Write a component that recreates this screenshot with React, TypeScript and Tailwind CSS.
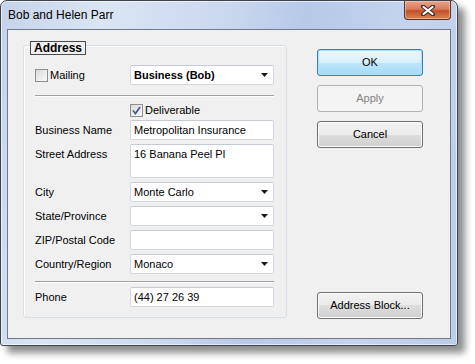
import React from 'react';

const font = { fontFamily: '"Liberation Sans", Arial, sans-serif' };

interface RowProps {
  label: string;
  value?: string;
  combo?: boolean;
  tall?: boolean;
}

const Arrow: React.FC = () => (
  <svg width="7" height="4" viewBox="0 0 7 4" className="shrink-0">
    <path d="M0 0 H7 L3.5 4 Z" fill="#1a1a1a" />
  </svg>
);

const Field: React.FC<{ value?: string; combo?: boolean; tall?: boolean; bold?: boolean }> = ({ value, combo, tall, bold }) => (
  <div
    className={`flex w-[144px] rounded-[2px] border border-[#d3d7de] border-t-[#c5cad2] bg-white pl-[3px] pr-[5px] text-[11px] text-black ${
      tall ? 'h-[34px] items-start pt-[3px]' : 'h-[20px] items-center'
    } ${bold ? 'font-bold' : ''}`}
  >
    <span className="flex-1 truncate leading-[13px]">{value}</span>
    {combo && <Arrow />}
  </div>
);

const Row: React.FC<RowProps> = ({ label, value, combo, tall }) => (
  <div className="flex items-start">
    <div className="w-[106px] pl-[11px] text-[11px] leading-[20px] text-black">{label}</div>
    <Field value={value} combo={combo} tall={tall} />
  </div>
);

const Checkbox: React.FC<{ checked?: boolean }> = ({ checked }) => (
  <div className="flex h-[13px] w-[13px] items-center justify-center border border-[#8e8f8f] bg-gradient-to-br from-[#dcdcdc] to-[#fafafa]">
    {checked && (
      <svg width="9" height="9" viewBox="0 0 9 9">
        <path d="M1 4.5 L3.5 7.5 L8 1" fill="none" stroke="#4b5d8f" strokeWidth="1.8" />
      </svg>
    )}
  </div>
);

const Separator: React.FC = () => <div className="ml-[11px] mr-[12px] h-[2px] border-t border-b border-t-[#a0a0a0] border-b-white" />;

const Button: React.FC<{ label: string; variant?: 'default' | 'disabled' | 'normal' }> = ({ label, variant = 'normal' }) => {
  const styles =
    variant === 'default'
      ? 'border-[#3c7fb1] bg-[linear-gradient(#eaf6fd_0%,#d9f0fc_50%,#bee6fd_50%,#a7d9f5_100%)] text-black shadow-[inset_0_0_0_1px_#a8e1fb]'
      : variant === 'disabled'
      ? 'border-[#adb2b5] bg-[#f4f4f4] text-[#838383]'
      : 'border-[#707070] bg-[linear-gradient(#f2f2f2_0%,#ebebeb_50%,#dddddd_50%,#cfcfcf_100%)] text-black shadow-[inset_0_0_0_1px_#fcfcfc]';
  return (
    <div className={`flex h-[27px] w-[106px] items-center justify-center rounded-[3px] border text-[11px] ${styles}`}>
      {label}
    </div>
  );
};

export default function App() {
  return (
    <div className="h-[364px] w-[475px] bg-white" style={font}>
      <div className="flex h-[346px] w-[458px] flex-col rounded-t-[7px] rounded-b-[3px] border border-[#3d434d] bg-[linear-gradient(100deg,#c4d3ea_0%,#dbe5f4_20%,#c9d7ee_45%,#b7c9e8_60%,#c6d5ee_80%,#bccde9_100%)] px-[6px] pb-[6px] shadow-[7px_7px_7px_rgba(0,0,0,0.45),inset_0_0_0_1px_rgba(255,255,255,0.6)]">
        <div className="flex h-[28px] items-start">
          <div className="pl-[1px] pt-[7px] text-[12px] leading-[14px] text-black">Bob and Helen Parr</div>
          <div className="ml-auto flex h-[19px] w-[47px] items-center justify-center rounded-b-[4px] border border-t-0 border-[#5b3128] bg-[linear-gradient(#e8a68c_0%,#d97b5c_45%,#c24f2b_55%,#d8854e_100%)] shadow-[inset_0_0_0_1px_rgba(255,220,200,0.5)]">
            <svg width="14" height="11" viewBox="0 0 14 11">
              <path d="M2 1.5 L12 9.5 M12 1.5 L2 9.5" stroke="#3a2a2a" strokeWidth="4" strokeLinecap="round" />
              <path d="M2.5 2 L11.5 9 M11.5 2 L2.5 9" stroke="#ffffff" strokeWidth="2.2" strokeLinecap="round" />
            </svg>
          </div>
        </div>
        <div className="flex flex-1 border border-[#6f7b8c] bg-[#f0f0f0] pb-[20px] pl-[15px] pt-[15px]">
          <div className="relative w-[264px] rounded-[3px] border border-[#d5dfe5] shadow-[inset_1px_1px_0_#ffffff]">
            <div className="absolute left-[6px] top-[-5px] border border-[#4b4b4b] bg-[#f0f0f0] px-[3px] text-[12px] font-bold leading-[12px] text-black">
              Address
            </div>
            <div className="flex flex-col pt-[19px]">
              <div className="flex items-center">
                <div className="flex w-[106px] items-center gap-[2px] pl-[11px]">
                  <Checkbox />
                  <span className="text-[11px] text-black">Mailing</span>
                </div>
                <Field value="Business (Bob)" combo bold />
              </div>
              <div className="mt-[10px]">
                <Separator />
              </div>
              <div className="ml-[106px] mt-[7px] flex items-center gap-[2px]">
                <Checkbox checked />
                <span className="text-[11px] leading-[13px] text-black">Deliverable</span>
              </div>
              <div className="mt-[3px] flex flex-col gap-[4px]">
                <Row label="Business Name" value="Metropolitan Insurance" />
                <Row label="Street Address" value="16 Banana Peel Pl" tall />
                <Row label="City" value="Monte Carlo" combo />
                <Row label="State/Province" combo />
                <Row label="ZIP/Postal Code" />
                <Row label="Country/Region" value="Monaco" combo />
              </div>
              <div className="mt-[7px]">
                <Separator />
              </div>
              <div className="mt-[4px]">
                <Row label="Phone" value="(44) 27 26 39" />
              </div>
            </div>
          </div>
          <div className="-mb-[1px] ml-[30px] flex flex-col pt-[4px]">
            <div className="flex flex-col gap-[9px]">
              <Button label="OK" variant="default" />
              <Button label="Apply" variant="disabled" />
              <Button label="Cancel" />
            </div>
            <div className="mt-auto">
              <Button label="Address Block..." />
            </div>
          </div>
        </div>
      </div>
    </div>
  );
}
